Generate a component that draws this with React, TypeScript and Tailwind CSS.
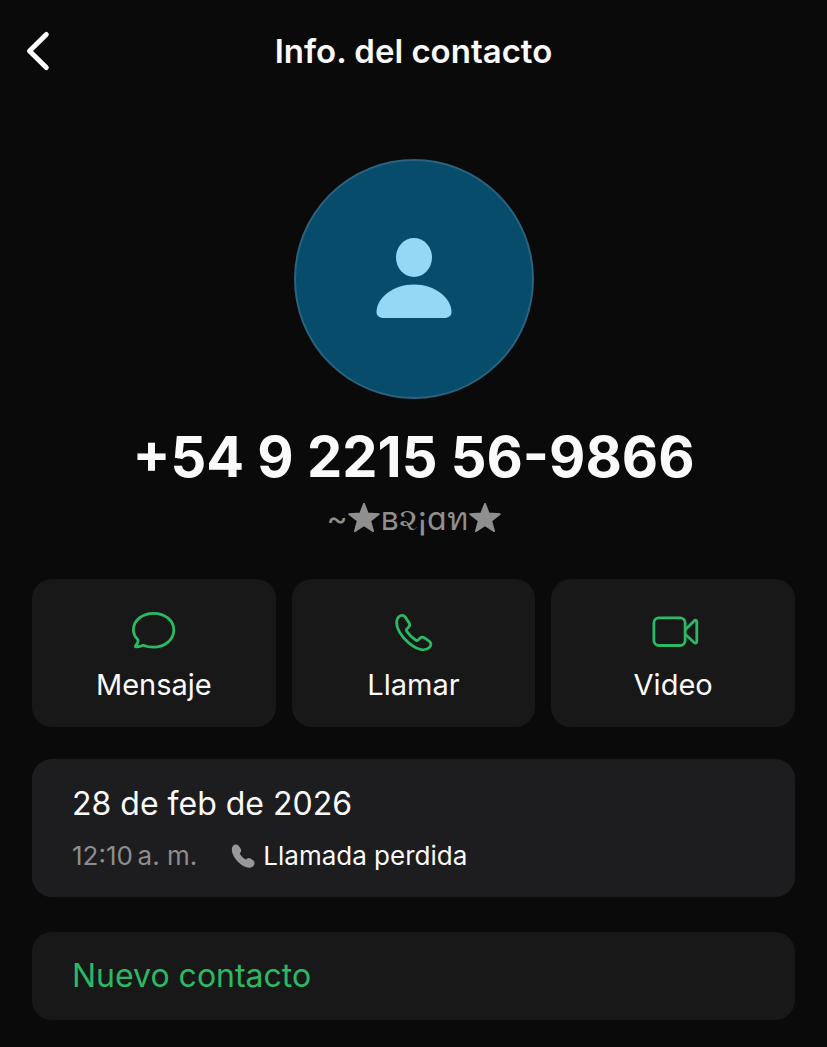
import type { ReactNode } from 'react'

interface Action {
    label: string
    icon: ReactNode
}

function BackIcon() {
    return (
        <svg viewBox="0 0 24 40" className="h-10 w-6 overflow-visible" fill="none" stroke="currentColor" strokeWidth="5" strokeLinecap="round" strokeLinejoin="round">
            <path d="M22.300 3.500 5.500 20l16.800 16.500" />
        </svg>
    )
}

function PersonIcon() {
    return (
        <svg viewBox="0 0 76 80" className="h-20 w-[76px] overflow-visible" fill="currentColor">
            <ellipse cx="38" cy="18.500" rx="18" ry="19.500" />
            <path d="M8 79C3 79 .5 76.500.5 73 .5 59 17 45.500 38 45.500S75.500 59 75.500 73c0 3.500-2.500 6-7.500 6Z" />
        </svg>
    )
}

function MessageIcon() {
    return (
        <svg viewBox="0 0 48 48" className="size-12" fill="none" stroke="currentColor" strokeWidth="2.800" strokeLinejoin="round">
            <path d="M23.600 6.300c11.600 0 20.200 7.400 20.200 16.800S35.200 40.200 23.600 40.200c-4 0-7.300-.7-10.500-2-1.900.8-4.200 2-7.300 1.700-.6-.1-.7-.6-.3-1 1.700-2 2.900-4.200 2.600-6C4.900 29.700 3.400 26.400 3.400 23 3.400 13.700 12 6.300 23.600 6.300Z" />
        </svg>
    )
}

function CallIcon() {
    return (
        <svg viewBox="0 0 48 48" className="size-12" fill="none" stroke="currentColor" strokeWidth="2.800" strokeLinejoin="round">
            <path d="M10 9.600c1.600-1.700 4.600-1.800 6.100.3l4 6c.9 1.400.7 2.800-.3 4l-2 2.200c-.6.7-.6 1.300-.1 2.100 2.300 3.500 5.600 6.700 9.200 9 .8.500 1.500.4 2.200-.2l2-1.900c1.200-1.100 2.700-1.300 4-.4l5.300 3.600c2 1.400 1.900 4.200.2 5.900-4.600 4.600-12.600 2.400-20.600-4.100C11.900 29.600 7.400 21.100 7.600 14.900c.1-2.100.9-3.900 2.400-5.300Z" />
        </svg>
    )
}

function VideoIcon() {
    return (
        <svg viewBox="0 0 48 48" className="size-12 overflow-visible" fill="none" stroke="currentColor" strokeWidth="2.800" strokeLinejoin="round">
            <rect x="4.900" y="10.900" width="31.200" height="27.600" rx="5" />
            <path d="m36.500 22.500 8.600-8.600c1.200-1.100 2.700-.7 2.700.9v19.800c0 1.600-1.500 2-2.700.9l-8.600-8" />
        </svg>
    )
}

function MissedCallIcon() {
    return (
        <svg viewBox="0 0 24 24" className="size-6" fill="currentColor">
            <path d="M2 1.800C3.900-.1 6.500.2 8 2.300l1.700 2.600c.8 1.300.6 2.500-.3 3.600-.6.700-.6 1.300-.1 2 1.200 1.900 2.700 3.300 4.500 4.500.7.500 1.300.4 2-.2 1.100-1 2.500-1.100 3.700-.3l2.500 1.700c2 1.400 2 4 .4 5.700-3.400 3.500-9.800 1.500-15-3.600C2.300 13.300-1.100 5.700 2 1.800Z" />
        </svg>
    )
}

const actions: Action[] = [
    { label: 'Mensaje', icon: <MessageIcon /> },
    { label: 'Llamar', icon: <CallIcon /> },
    { label: 'Video', icon: <VideoIcon /> },
]

function Star() {
    return (
        <svg viewBox="0 0 30 30" className="size-8" fill="currentColor" stroke="currentColor" strokeWidth="1.600" strokeLinejoin="round">
            <path d="m15 .5 3.600 9.300 10.400.6-8.100 6.300 2.700 9.800L15 21l-8.600 5.500 2.700-9.800L1 10.400l10.400-.6Z" />
        </svg>
    )
}

export default function App() {
    return (
        <div className="min-h-screen bg-[#0a0a0a] px-8 pb-7 font-['Inter','Noto_Sans',sans-serif] text-[#fafafa]">
            <header className="grid h-[102px] grid-cols-[24px_1fr_24px] items-center">
                <button aria-label="Atrás" className="-ml-2 text-white">
                    <BackIcon />
                </button>
                <h1 className="text-center text-[33px] leading-10 font-semibold">Info. del contacto</h1>
            </header>

            <main>
                {/* Profile */}
                <section className="flex flex-col items-center pt-[57px]">
                    <div className="flex size-60 items-center justify-center rounded-full border-2 border-[#2a637f] bg-[#074c6a] text-[#95d8f6]">
                        <PersonIcon />
                    </div>
                    <h2 className="mt-6 text-[56px] leading-[68px] font-bold">+54 9 2215 56-9866</h2>
                    <p className="mt-2 flex h-10 items-center text-[32px] leading-10 text-[#8f8f8f]">
                        ~<Star />
                        <span className="mx-px">в૨¡ɑท</span>
                        <Star />
                    </p>
                </section>

                {/* Actions */}
                <div className="mt-10 grid grid-cols-3 gap-4">
                    {actions.map((action) => (
                        <button
                            key={action.label}
                            className="flex h-[148px] flex-col items-center rounded-[20px] bg-[#181818] pt-7 text-[29px] leading-9"
                        >
                            <span className="text-[#2bb965]">{action.icon}</span>
                            <span className="mt-3">{action.label}</span>
                        </button>
                    ))}
                </div>

                {/* Call log */}
                <section className="mt-8 rounded-[20px] bg-[#1d1d1f] px-10 pt-[25px] pb-[23px]">
                    <h3 className="text-[32px] leading-10">28 de feb de 2026</h3>
                    <div className="mt-[14px] flex items-center text-[26px] leading-9">
                        <time className="text-[#8d8d8f]">12:10&#8239;a. m.</time>
                        <span className="mr-2 ml-[34px] text-[#98989a]">
                            <MissedCallIcon />
                        </span>
                        <span>Llamada perdida</span>
                    </div>
                </section>

                <button className="mt-[35px] block h-[88px] w-full rounded-[20px] bg-[#181818] px-10 text-left text-[32px] leading-10 text-[#2bb965]">
                    Nuevo contacto
                </button>
            </main>
        </div>
    )
}
